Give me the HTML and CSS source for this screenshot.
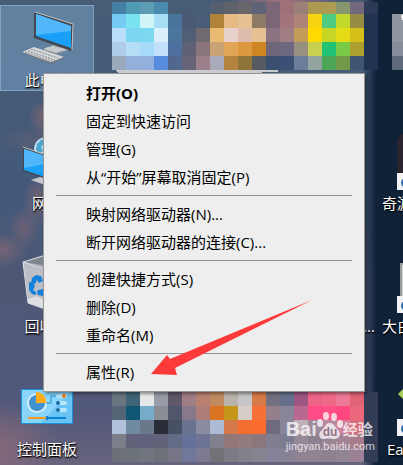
FILE: index.html
```html
<!DOCTYPE html>
<html lang="zh-CN">
<head>
  <meta charset="UTF-8">
  <meta name="viewport" content="width=device-width, initial-scale=1.0">
  <title>桌面</title>
  <link rel="stylesheet" href="styles.css">
</head>
<body>
  <div class="desktop">
    <svg class="mosaic" width="403" height="465" shape-rendering="crispEdges" aria-hidden="true"></svg>

    <main class="icons">
      <a href="#" class="shortcut selected">
        <svg viewBox="0 0 60 60">
          <path d="M28 38l10-3 13 3-1 3-11 3-12-4z" fill="#c5c9cc"/>
          <path d="M28 40l11 3 11-3v1l-11 3-11-3z" fill="#777d82"/>
          <path d="M38 33l5 1v4l-5-1z" fill="#a6abad"/>
          <path d="M17 3l2-1 37 12v2l-1 24-1 1-37-13z" fill="#42484e"/>
          <path d="M18 2l38 12-1 26" fill="none" stroke="#c3c7c8"/>
          <path d="M19 4l35 12v22L19 26z" fill="#1ba0fa"/>
          <path d="M19 4l35 12v5L19 25z" fill="#51b7fb"/>
          <path d="M5 42l12-5 30 10-13 6z" fill="#d5d7d8"/>
          <path d="M5 42l29 10 13-5v1l-13 6L5 43z" fill="#747980"/>
          <path d="M8 42l27 9M11 41l27 9M14 39l27 9" stroke="#888d91" stroke-dasharray="2 1" fill="none"/>
        </svg>
        <span>此电脑</span>
      </a>
      <a href="#" class="shortcut cut">
        <svg viewBox="0 0 60 60"><path d="M8 6q2-4 6 0v4H9z" fill="#fff"/></svg>
      </a>

      <a href="#" class="shortcut">
        <svg viewBox="0 0 60 60">
          <circle cx="29" cy="16" r="12" fill="#b9dce9"/>
          <path d="M20 11l5-5 2 4-3 4 2 4-3 2-4-3z" fill="#4aa5cf"/>
          <path d="M14 47l12-4 14 4-12 5z" fill="#c5c9cc"/>
          <path d="M6 14l38 13v24L6 38z" fill="#42484e"/>
          <path d="M6 14l38 13" stroke="#c3c7c8"/>
          <path d="M7 16l36 12v21L7 37z" fill="#1ba0fa"/>
          <path d="M7 16l36 12L7 35z" fill="#51b7fb"/>
        </svg>
        <span>网络</span>
      </a>
      <a href="#" class="shortcut cut">
        <svg viewBox="0 0 60 60">
          <rect x="4" width="60" height="56" rx="10" fill="#29242e"/>
          <path d="M4 40h20v17H4z" fill="#f2f2f4"/>
          <path d="M14 44q-6 1-6 6t6 4z" fill="#2f6db5"/>
        </svg>
        <span>奇游</span>
      </a>

      <a href="#" class="shortcut">
        <svg viewBox="0 0 60 60">
          <path d="M6 6l21-7 21 8-5 40-14 6-18-6z" fill="#a3a8b1"/>
          <path d="M6 6l20-6v9z" fill="#7d858f"/>
          <path d="M6 6l20 6v37l-15-5z" fill="#bcc0c6"/>
          <path d="M11 43l8-3 9 4v9l-17-6z" fill="#dedfe0"/>
          <path d="M6 6l5 41 17 6M6 6l20-6M6 6l20 6" fill="none" stroke="#d8dbdf"/>
          <path d="M15 22l4-3 5 1 2 5-4 2-2-3-2 4-4-1zM12 26l4 1 2 3-2 4 3 2v3l-4-1-3-4zM21 34l5-1v7l-5-1-1-3z" fill="#1482dc"/>
        </svg>
        <span>回收站</span>
      </a>
      <a href="#" class="shortcut more"><span>...</span></a>
      <a href="#" class="shortcut cut">
        <svg viewBox="0 0 60 60">
          <path d="M7 7h40v50H7z" fill="#9a9ea3"/>
          <path d="M9 9h38v48H9z" fill="#d7d8d8"/>
          <path d="M10 14h8M10 18h8M10 22h8M10 26h8M10 30h8" stroke="#858a8f"/>
          <path d="M4 40h20v17H4z" fill="#f2f2f4"/>
          <path d="M14 44q-6 1-6 6t6 4z" fill="#2f6db5"/>
        </svg>
        <span>大白</span>
      </a>

      <a href="#" class="shortcut">
        <svg viewBox="0 0 60 60">
          <path d="M4 10h52v35H4z" fill="#1d92d6"/>
          <path d="M5 11h50v33H5z" fill="#69c4f5"/>
          <path d="M5 11h50L24 44H5z" fill="#88d4fa"/>
          <circle cx="20" cy="24" r="10" fill="#d8edf5"/>
          <circle cx="20" cy="24" r="8" fill="#3f91cf"/>
          <path d="M19 13a10 10 0 0 1 10 11H19z" fill="#ffab19"/>
          <path d="M29 24h5v-7h5" fill="none" stroke="#218fca"/>
          <rect x="39" y="15" width="11" height="4" rx="2" fill="#b4e7fb"/>
          <rect x="39" y="22" width="11" height="4" rx="2" fill="#b4e7fb"/>
          <rect x="39" y="29" width="11" height="4" rx="2" fill="#b4e7fb"/>
          <circle cx="47" cy="17" r="2" fill="#f47b15"/>
          <circle cx="41" cy="24" r="2" fill="#176aa1"/>
          <circle cx="41" cy="31" r="2" fill="#176aa1"/>
          <path d="M11 39h20" stroke="#f39b1e" stroke-width="2"/>
          <path d="M31 39h18M30 37v4" stroke="#0c83d1" stroke-width="2"/>
        </svg>
        <span>控制面板</span>
      </a>
      <a href="#" class="shortcut cut latin">
        <svg viewBox="0 0 60 60">
          <path d="M5 15l12-12v24z" fill="#a8cc55"/>
          <path d="M4 40h20v17H4z" fill="#f2f2f4"/>
          <path d="M14 44q-6 1-6 6t6 4z" fill="#2f6db5"/>
        </svg>
        <span>Eas</span>
      </a>
    </main>

    <div class="menu" role="menu">
      <button class="default" role="menuitem">打开(O)</button>
      <button role="menuitem">固定到快速访问</button>
      <button role="menuitem">管理(G)</button>
      <button role="menuitem">从“开始”屏幕取消固定(P)</button>
      <hr>
      <button role="menuitem">映射网络驱动器(N)...</button>
      <button role="menuitem">断开网络驱动器的连接(C)...</button>
      <hr>
      <button role="menuitem">创建快捷方式(S)</button>
      <button role="menuitem">删除(D)</button>
      <button role="menuitem">重命名(M)</button>
      <hr>
      <button role="menuitem">属性(R)</button>
      <svg class="arrow" viewBox="0 0 162 76" aria-hidden="true">
        <path d="M0 74l16-19 3 4L161 0 24 68l2 7z" fill="#fd3a3a"/>
      </svg>
    </div>

    <div class="watermark">
      <div class="brand">
        <span class="bai">Bai</span>
        <svg viewBox="0 0 26 27">
          <ellipse cx="3" cy="11" rx="3" ry="4"/>
          <ellipse cx="9" cy="4" rx="3" ry="4"/>
          <ellipse cx="17" cy="5" rx="3" ry="4"/>
          <ellipse cx="23" cy="12" rx="3" ry="4"/>
          <path d="M13 11c4 0 5 4 8 7 4 4 1 9-3 9-3 0-7-1-10 0-5 1-8-4-4-8 4-3 4-8 9-8z"/>
          <text x="13" y="24">du</text>
        </svg>
        <span class="jingyan">经验</span>
      </div>
      <div class="url">jingyan.baidu.com</div>
    </div>
  </div>

  <script>
    const cell = 14;
    const startX = 112;

    // one string per row of cells, keyed by the y of the row
    const rows = {
      2: '457fa3 4f9ab3 5c9db3 4a8aad - - - 555f70 5f636b 68666b 5f6377 7b6577 a07078 9b8078 ab9a50 ab9a50 86966f 72697f 2c3a58',
      14: '76cbf5 79e3f0 d0f5f6 a5def5 48739b 4a5a75 4a5d78 b08339 e6ba84 e6c293 8e7a66 7b6577 a2757c af8478 f7d412 4dcc82 c2d82a 968d42 203452 - 9097a3',
      28: 'bbdefb 7cd5f1 7cd8f0 dbeffc 4b759b 515e76 6f6a70 eab972 e8d2cb dfbbae e6c293 8a7280 a07c83 c39d57 ffd900 c7d625 e6dc16 d4c019 203452 - 9097a3',
      42: 'afcceb b5ddf5 a5daf8 c5e0fc 4e70a0 5f6276 8a757a c9a374 e2a457 dd9940 d08620 6c6678 6c6880 98907f c9cf51 23c174 79ca47 aca12f 203452 - 858d9b',
      56: '9ba9bd 94afd9 91b0de 578cde 52678e 676378 9b808c a9abba b48340 8f753a 555b60 3a4f70 3a5075 6b7d9b 92a3a0 4da557 72984a 405570 203452 - 5f6b7c',
      392: '68747e 3f6478 e6e8e8 989ca6 605769 a07e85 b98070 c28b5f b9b3aa c6c4c5 d77a47 747080 66708b a05683 ee6486 f06989 ee7a95 df6275 333c55',
      406: '546577 0f5574 74acc9 8a8c96 50566b 87788c ae7d77 da7422 c4971a d5ccc8 f57135 967f8d 8a8499 b9698f ff4c87 ff4e85 ff4780 eb687c 333c55',
      420: 'b0c2da 708aa0 6a7889 292d38 475064 6b7290 898ba0 aebbd4 d5794a f36d31 fa6b2d 6f6a7d 8a8598 c0aeb8 9c8b9d b58a9f d08098 d86c7a 333c55',
      434: '7c7e8a 62637a 60617a 62637a 626c87 66719a 6c7394 80808f 937778 937a7c 8b777b 817e90 7d7b90 968998 8d8090 9a8494 a28494 a87e8c 333c55',
      448: '6c7079 6c737b 717580 6d717a 757585 70779a 7d7b94 747279 7c7a82 82818b 858491 85839a 888297 8f8394 918392 8d8090 938494 9a8294 333c55'
    };

    const svg = document.querySelector('.mosaic');
    let cells = '<path d="M115 70h163v2h-16v2H120z" fill="#cccbd1"/>';
    cells += '<path d="M112 391h16v2h-12v2h-4zM154 391h18v4h-6v-2h-12z" fill="#0a0f1e"/>';
    for (const y in rows) {
      rows[y].split(' ').forEach((color, i) => {
        if (color === '-') return;
        cells += `<rect x="${startX + i * cell}" y="${y}" width="${cell}" height="${cell}" fill="#${color}"/>`;
      });
    }
    svg.innerHTML = cells;
  </script>
</body>
</html>
```
FILE: styles.css
```css
* {
  margin: 0;
  padding: 0;
  box-sizing: border-box;
}

body {
  font-family: "Open Sans", "Noto Sans CJK SC", sans-serif;
  font-size: 15px;
}

/* evening sky wallpaper, dark on the right */
.desktop {
  position: relative;
  height: 100vh;
  overflow: hidden;
  background:
    linear-gradient(90deg, transparent 362px, #0f2238 376px),
    radial-gradient(ellipse 60px 14px at 285px 2px, #a4737c, transparent),
    radial-gradient(ellipse 16px 20px at 44px 118px, #7a6472, transparent),
    radial-gradient(ellipse 34px 14px at 30px 140px, #66617599, transparent),
    radial-gradient(ellipse 16px 26px at 38px 200px, #756373, transparent),
    radial-gradient(ellipse 16px 22px at 24px 228px, #6e6275, transparent),
    radial-gradient(ellipse 26px 18px at 2px 250px, #776476, transparent),
    radial-gradient(ellipse 60px 50px at 0 450px, #86687a, transparent),
    linear-gradient(180deg, #475c75, #42597a 42%, #4e5875 60%, #52587a 88%, #67647d);
}

.mosaic {
  position: absolute;
  top: 0;
  left: 0;
}

.icons {
  position: relative;
  display: grid;
  grid-template-columns: repeat(5, 94px);
  grid-auto-rows: 123px;
  align-items: start;
  padding-top: 5px;
}

.shortcut {
  grid-column: 1;
  display: flex;
  flex-direction: column;
  align-items: center;
  padding-top: 4px;
  border: 1px solid transparent;
  color: #fff;
  line-height: 20px;
  text-decoration: none;
  text-shadow: 1px 1px 2px #000, 0 1px 1px #000;
}

.shortcut svg {
  width: 60px;
  height: 60px;
  overflow: visible;
}

.shortcut.selected {
  background: rgba(130, 175, 215, 0.45);
  border-color: #83a1bd;
}

.shortcut.cut {
  grid-column: 5;
}

.shortcut.cut span {
  align-self: flex-start;
  padding-left: 5px;
}

.shortcut.latin span {
  padding-left: 10px;
}

.shortcut.more {
  grid-column: 4;
  align-items: flex-end;
  padding-top: 64px;
}

.menu {
  position: absolute;
  top: 73px;
  left: 43px;
  width: 322px;
  padding: 5px 0;
  background: #eee;
  border: 1px solid #979797;
  box-shadow: 2px 2px 3px rgba(0, 0, 0, 0.4);
}

.menu button {
  display: block;
  width: 100%;
  height: 28px;
  padding-left: 42px;
  border: none;
  background: none;
  color: #000;
  font: inherit;
  line-height: 28px;
  text-align: left;
}

.menu button:hover {
  background: #fff;
}

.menu .default {
  font-weight: 700;
}

.menu hr {
  height: 1px;
  margin: 4px 12px;
  border: none;
  background: #919191;
}

.arrow {
  position: absolute;
  top: 226px;
  left: 107px;
  width: 162px;
  pointer-events: none;
}

.watermark {
  position: absolute;
  right: 28px;
  bottom: 10px;
  color: #fff;
  opacity: 0.75;
}

.brand {
  display: flex;
  align-items: flex-end;
  height: 28px;
  line-height: 20px;
}

.brand .bai {
  font-family: "Liberation Sans", sans-serif;
  font-size: 20px;
  font-weight: 700;
}

.brand svg {
  width: 26px;
  height: 27px;
  fill: #fff;
}

.brand text {
  fill: #8a6a84;
  font: 700 12px "Liberation Sans", sans-serif;
  text-anchor: middle;
}

.brand .jingyan {
  font-weight: 700;
}

.url {
  font-family: Roboto, sans-serif;
  font-size: 11px;
  line-height: 16px;
}
```
